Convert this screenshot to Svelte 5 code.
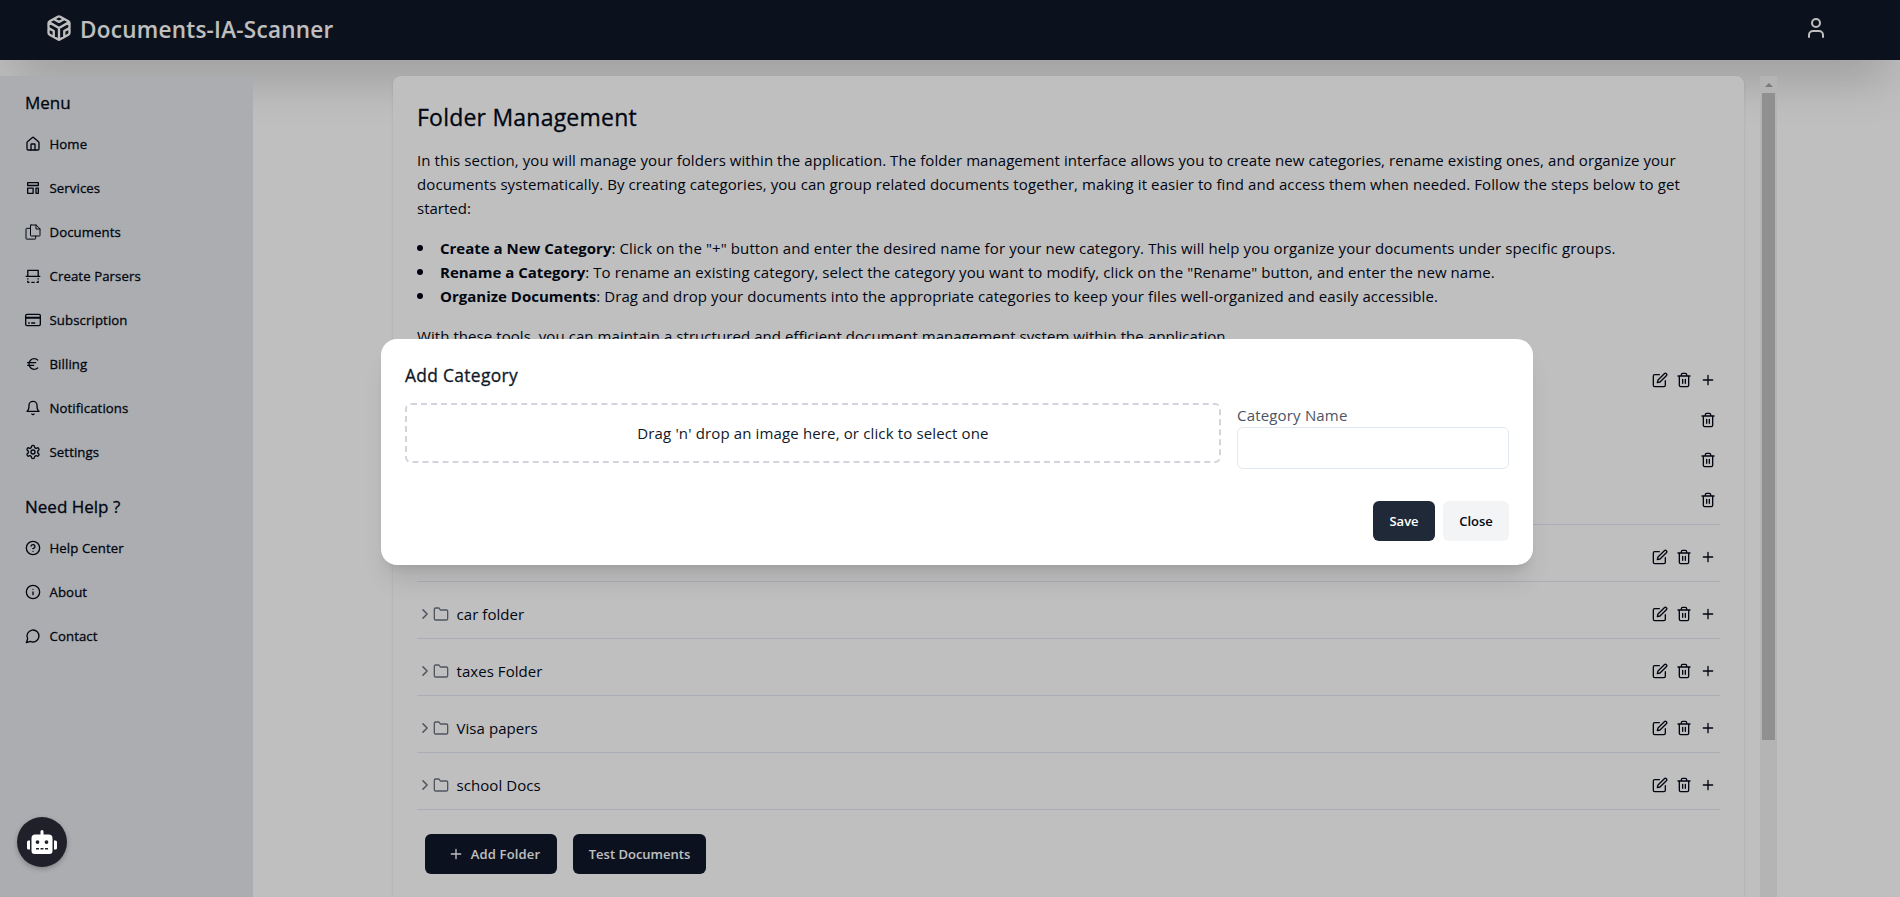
<script>
  const paths = {
    home: '<path d="M15 21v-8a1 1 0 0 0-1-1h-4a1 1 0 0 0-1 1v8"/><path d="M3 10a2 2 0 0 1 .709-1.528l7-5.999a2 2 0 0 1 2.582 0l7 5.999A2 2 0 0 1 21 10v9a2 2 0 0 1-2 2H5a2 2 0 0 1-2-2z"/>',
    services: '<path d="M4 4h16v4.200H4zM4 12.200h8.200V20H4zM16.500 12.200H20V20h-3.500z"/>',
    documents: '<path stroke-width="1.500" d="M8.250 1.500h8.500L22.500 7.200v9.800q0 1-1 1H9.250q-1 0-1-1V2.500q0-1 1-1M16.500 1.500v6h6M8.250 6.500H2.500q-1 0-1 1v14.200q0 1 1 1H15q1 0 1-1v-3.400"/>',
    parsers: '<path stroke-linecap="butt" d="M4.200 12V3.500h15.600V12M1 12.500h22M4.200 15.500v1.800M19.800 15.500v1.800M4.200 19v2.500h2.600M19.800 19v2.500h-2.600M9.500 21.500h5"/>',
    card: '<rect x="1" y="3.500" width="22" height="17" rx="2"/><path stroke-width="3" d="M1 8.500h22"/><path d="M5.500 16.500h1M10 16.500h4.500"/>',
    euro: '<path d="M4 10h12M4 14h9M19 6a7.700 7.700 0 0 0-5.200-2A7.900 7.900 0 0 0 6 12c0 4.400 3.500 8 7.800 8 2 0 3.800-.8 5.200-2"/>',
    bell: '<path d="M6 8a6 6 0 0 1 12 0c0 7 3 9 3 9H3s3-2 3-9M10.300 21a1.940 1.940 0 0 0 3.400 0"/>',
    settings: '<path d="M12.220 2h-.44a2 2 0 0 0-2 2v.18a2 2 0 0 1-1 1.730l-.43.25a2 2 0 0 1-2 0l-.15-.08a2 2 0 0 0-2.730.73l-.22.38a2 2 0 0 0 .73 2.730l.15.1a2 2 0 0 1 1 1.720v.51a2 2 0 0 1-1 1.740l-.15.09a2 2 0 0 0-.73 2.730l.22.38a2 2 0 0 0 2.730.73l.15-.08a2 2 0 0 1 2 0l.43.25a2 2 0 0 1 1 1.730V20a2 2 0 0 0 2 2h.44a2 2 0 0 0 2-2v-.18a2 2 0 0 1 1-1.730l.43-.25a2 2 0 0 1 2 0l.15.08a2 2 0 0 0 2.730-.73l.22-.39a2 2 0 0 0-.73-2.730l-.15-.08a2 2 0 0 1-1-1.740v-.5a2 2 0 0 1 1-1.740l.15-.09a2 2 0 0 0 .73-2.730l-.22-.38a2 2 0 0 0-2.730-.73l-.15.08a2 2 0 0 1-2 0l-.43-.25a2 2 0 0 1-1-1.730V4a2 2 0 0 0-2-2z"/><circle cx="12" cy="12" r="3"/>',
    help: '<circle cx="12" cy="12" r="10"/><path d="M9.090 9a3 3 0 0 1 5.830 1c0 2-3 3-3 3M12 17h.01"/>',
    info: '<circle cx="12" cy="12" r="10"/><path d="M12 16v-4M12 8h.01"/>',
    chat: '<path d="M7.900 20A9 9 0 1 0 4 16.100L2 22Z"/>',
    edit: '<path d="M11 4H4a2 2 0 0 0-2 2v14a2 2 0 0 0 2 2h14a2 2 0 0 0 2-2v-7"/><path d="M18.500 2.500a2.121 2.121 0 0 1 3 3L12 15l-4 1 1-4 9.500-9.500z"/>',
    trash: '<path d="M3 6h18M19 6v14c0 1-1 2-2 2H7c-1 0-2-1-2-2V6M8 6V4c0-1 1-2 2-2h4c1 0 2 1 2 2v2M10 11v6M14 11v6"/>',
    plus: '<path d="M5 12h14M12 5v14"/>',
    chevron: '<path stroke-width="2.200" d="m9 18.200 6.200-6.200L9 5.800"/>',
    folder: '<path d="M22 19a2 2 0 0 1-2 2H4a2 2 0 0 1-2-2V5a2 2 0 0 1 2-2h5l2 3h9a2 2 0 0 1 2 2z"/>',
    user: '<path d="M19 21v-2a4 4 0 0 0-4-4H9a4 4 0 0 0-4 4v2"/><circle cx="12" cy="7" r="4"/>',
    cube: '<path d="M21 16V8a2 2 0 0 0-1-1.730l-7-4a2 2 0 0 0-2 0l-7 4A2 2 0 0 0 3 8v8a2 2 0 0 0 1 1.730l7 4a2 2 0 0 0 2 0l7-4A2 2 0 0 0 21 16zM7.500 4.210l4.500 2.600 4.500-2.600M7.500 19.790V14.600L3 12M21 12l-4.500 2.600v5.190M3.270 6.960 12 12.010l8.730-5.050M12 22.080V12"/>'
  };
  const menu = [
    ['home', 'Home'], ['services', 'Services'], ['documents', 'Documents'], ['parsers', 'Create Parsers'],
    ['card', 'Subscription'], ['euro', 'Billing'], ['bell', 'Notifications'], ['settings', 'Settings']
  ];
  const help = [['help', 'Help Center'], ['info', 'About'], ['chat', 'Contact']];
  const folders = [
    { name: '', files: 3 },
    { name: '', files: 0 },
    { name: 'car folder', files: 0 },
    { name: 'taxes Folder', files: 0 },
    { name: 'Visa papers', files: 0 },
    { name: 'school Docs', files: 0 }
  ];
</script>

{#snippet icon(name, size = 16)}
  <svg class="icon" width={size} height={size} viewBox="0 0 24 24">{@html paths[name]}</svg>
{/snippet}

{#snippet links(items)}
  <nav>
    {#each items as [glyph, label]}
      <a href="#top">{@render icon(glyph)}<span>{label}</span></a>
    {/each}
  </nav>
{/snippet}

<div class="page">
  <header>
    <div class="brand">{@render icon('cube', 28)}<span>Documents-IA-Scanner</span></div>
    {@render icon('user', 24)}
  </header>

  <div class="body">
    <aside>
      <h2>Menu</h2>
      {@render links(menu)}
      <h2 class="second">Need Help ?</h2>
      {@render links(help)}
    </aside>

    <main>
      <section class="card">
        <h1>Folder Management</h1>
        <p class="l1">In this section, you will manage your folders within the application. The folder management interface allows you to create new categories, rename existing ones, and organize your</p>
        <p class="l2">documents systematically. By creating categories, you can group related documents together, making it easier to find and access them when needed. Follow the steps below to get</p>
        <p>started:</p>
        <ul>
          <li><span class="b1"><b>Create a New Category</b>: Click on the "+" button and enter the desired name for your new category. This will help you organize your documents under specific groups.</span></li>
          <li><span class="b2"><b>Rename a Category</b>: To rename an existing category, select the category you want to modify, click on the "Rename" button, and enter the new name.</span></li>
          <li><span class="b3"><b>Organize Documents</b>: Drag and drop your documents into the appropriate categories to keep your files well-organized and easily accessible.</span></li>
        </ul>
        <p class="l3">With these tools, you can maintain a structured and efficient document management system within the application.</p>

        <div class="folders">
          {#each folders as folder}
            <div class="folder">
              <div class="row">
                <div class="name">{@render icon('chevron')}{@render icon('folder')}<span>{folder.name}</span></div>
                <div class="tools">{@render icon('edit')}{@render icon('trash')}{@render icon('plus')}</div>
              </div>
              {#each { length: folder.files } as _}
                <div class="row child"><div class="tools">{@render icon('trash')}</div></div>
              {/each}
            </div>
          {/each}
        </div>

        <div class="buttons">
          <button class="add">{@render icon('plus')}<span>Add Folder</span></button>
          <button class="test">Test Documents</button>
        </div>
      </section>
      <div class="scrollbar"><i class="arrow"></i><i class="thumb"></i></div>
    </main>
  </div>

  <div class="overlay">
    <div class="modal">
      <h3>Add Category</h3>
      <div class="fields">
        <div class="drop"><span>Drag 'n' drop an image here, or click to select one</span></div>
        <label><span>Category Name</span><input type="text" /></label>
      </div>
      <div class="actions"><button class="save">Save</button><button class="close">Close</button></div>
    </div>
  </div>

  <div class="bot">
    <svg width="30" height="24" viewBox="0 0 640 512" fill="#fff"><path d="M32,224H64V416H32A32,32,0,0,1,0,384V256A32,32,0,0,1,32,224Zm512-48V448a64,64,0,0,1-64,64H160a64,64,0,0,1-64-64V176a80,80,0,0,1,80-80H288V32a32,32,0,0,1,64,0V96H464A80,80,0,0,1,544,176ZM264,256a40,40,0,1,0-40,40A40,40,0,0,0,264,256Zm-8,128H192v32h64Zm96,0H288v32h64ZM456,256a40,40,0,1,0-40,40A40,40,0,0,0,456,256Zm-8,128H384v32h64ZM640,256V384a32,32,0,0,1-32,32H576V224h32A32,32,0,0,1,640,256Z" /></svg>
  </div>
</div>

<style>
  :global(body) { margin: 0; overflow: hidden; }
  * { box-sizing: border-box; }
  .page { position: relative; height: 897px; overflow: hidden; background: #fff; color: #020817; font: 15px/24px "Open Sans", "Noto Sans", sans-serif; }
  .icon { display: block; flex: none; fill: none; stroke: currentColor; stroke-width: 2; stroke-linecap: round; stroke-linejoin: round; }
  h1, h2, h3, p, ul { margin: 0; padding: 0; font-weight: 500; }
  h1, h2, h3, nav span { -webkit-text-stroke: .3px currentColor; }
  header { position: relative; display: flex; justify-content: space-between; align-items: center; height: 60px; padding: 0 72px 4px 44.500px; background: #111827; color: #fff; box-shadow: 0 25px 50px -12px rgb(0 0 0 / .25); }
  .brand { display: flex; align-items: center; gap: 7.500px; font-size: 22.500px; font-weight: 600; letter-spacing: .26px; }
  .brand span { padding-top: 3px; }
  .body { position: relative; display: flex; height: 837px; padding-top: 16px; }
  aside { width: 253px; height: 821px; padding: 13px 25px; background: #e5e7eb; }
  h2 { font-size: 17px; line-height: 28px; }
  h2.second { margin-top: 19px; }
  nav { padding-top: 5px; }
  nav a { display: flex; align-items: center; gap: 8.500px; height: 44px; color: inherit; text-decoration: none; font-size: 13.200px; font-weight: 500; letter-spacing: .1px; }
  main { display: flex; margin-left: 140px; gap: 16px; }
  .card { width: 1351px; height: 840px; padding: 24px; border-radius: 8px; background: #fff; box-shadow: 0 1px 3px rgb(0 0 0 / .1), 0 1px 2px -1px rgb(0 0 0 / .1); }
  h1 { font-size: 23px; line-height: 32px; letter-spacing: .22px; margin: 1px 0 15px; }
  p, li { height: 24px; white-space: nowrap; font-weight: 400; }
  ul { margin: 16px 0; list-style: none; }
  li { display: flex; align-items: center; }
  li::before { content: ""; width: 6px; height: 6px; margin-right: 17px; border-radius: 50%; background: currentColor; }
  b { font-weight: 700; letter-spacing: 0; }
  .l1 { letter-spacing: .068px; }
  .l2 { letter-spacing: .09px; }
  .l3 { letter-spacing: .065px; }
  .b1 { letter-spacing: .113px; }
  .b2 { letter-spacing: .085px; }
  .b3 { letter-spacing: .1px; }
  .folder { padding: 16px 0 8px; border-bottom: 1px solid #e2e8f0; }
  .row { display: flex; justify-content: space-between; align-items: center; height: 32px; padding-right: 4px; }
  .child { margin-top: 8px; justify-content: flex-end; }
  .name { display: flex; align-items: center; }
  .name .icon { color: #6b7280; }
  .name span { margin-left: 7.500px; letter-spacing: .06px; }
  .tools { display: flex; gap: 8px; }
  .buttons { display: flex; gap: 16px; padding: 24px 8px; }
  button { display: flex; align-items: center; justify-content: center; height: 40px; padding: 0; border: 0; border-radius: 6px; background: #0f172a; color: #fff; font: 600 13px "Open Sans", sans-serif; }
  .add { width: 132px; gap: 7px; padding-left: 6px; letter-spacing: .18px; }
  .test { width: 133px; }
  .scrollbar { display: flex; flex-direction: column; align-items: center; width: 17px; height: 821px; background: #f0f0f0; }
  .arrow { height: 17px; padding-top: 7px; }
  .arrow::before { content: ""; display: block; border: 4px solid transparent; border-top: 0; border-bottom-color: #a3a3a3; }
  .thumb { width: 13px; height: 647px; background: #c1c1c1; }
  .overlay { position: absolute; inset: 0; background: rgb(0 0 0 / .25); }
  .modal { position: absolute; left: 381px; top: 339px; width: 1152px; height: 226px; padding: 24px; border-radius: 16px; background: #fff; color: #111827; box-shadow: 0 20px 25px -5px rgb(0 0 0 / .1), 0 8px 10px -6px rgb(0 0 0 / .1); }
  h3 { font-size: 17.400px; line-height: 24px; letter-spacing: .32px; margin-bottom: 16px; }
  .fields { display: grid; grid-template-columns: 816px 272px; gap: 16px; }
  .drop { display: flex; align-items: center; justify-content: center; height: 60px; border: 2px dashed #d1d5db; border-radius: 6px; letter-spacing: .14px; }
  label { display: block; color: #4b5563; letter-spacing: .18px; }
  label span { display: block; }
  input { display: block; width: 272px; height: 42px; border: 1px solid #e2e8f0; border-radius: 6px; background: #fff; }
  .actions { display: flex; justify-content: flex-end; gap: 8px; margin-top: 32px; }
  .save { width: 62px; background: #1f2937; }
  .close { width: 66px; background: #f3f4f6; color: #020817; }
  .bot { position: absolute; left: 17px; top: 817px; display: grid; place-items: center; width: 50px; height: 50px; border-radius: 50%; background: #20202a; box-shadow: 0 2px 5px rgb(0 0 0 / .25); }
</style>
